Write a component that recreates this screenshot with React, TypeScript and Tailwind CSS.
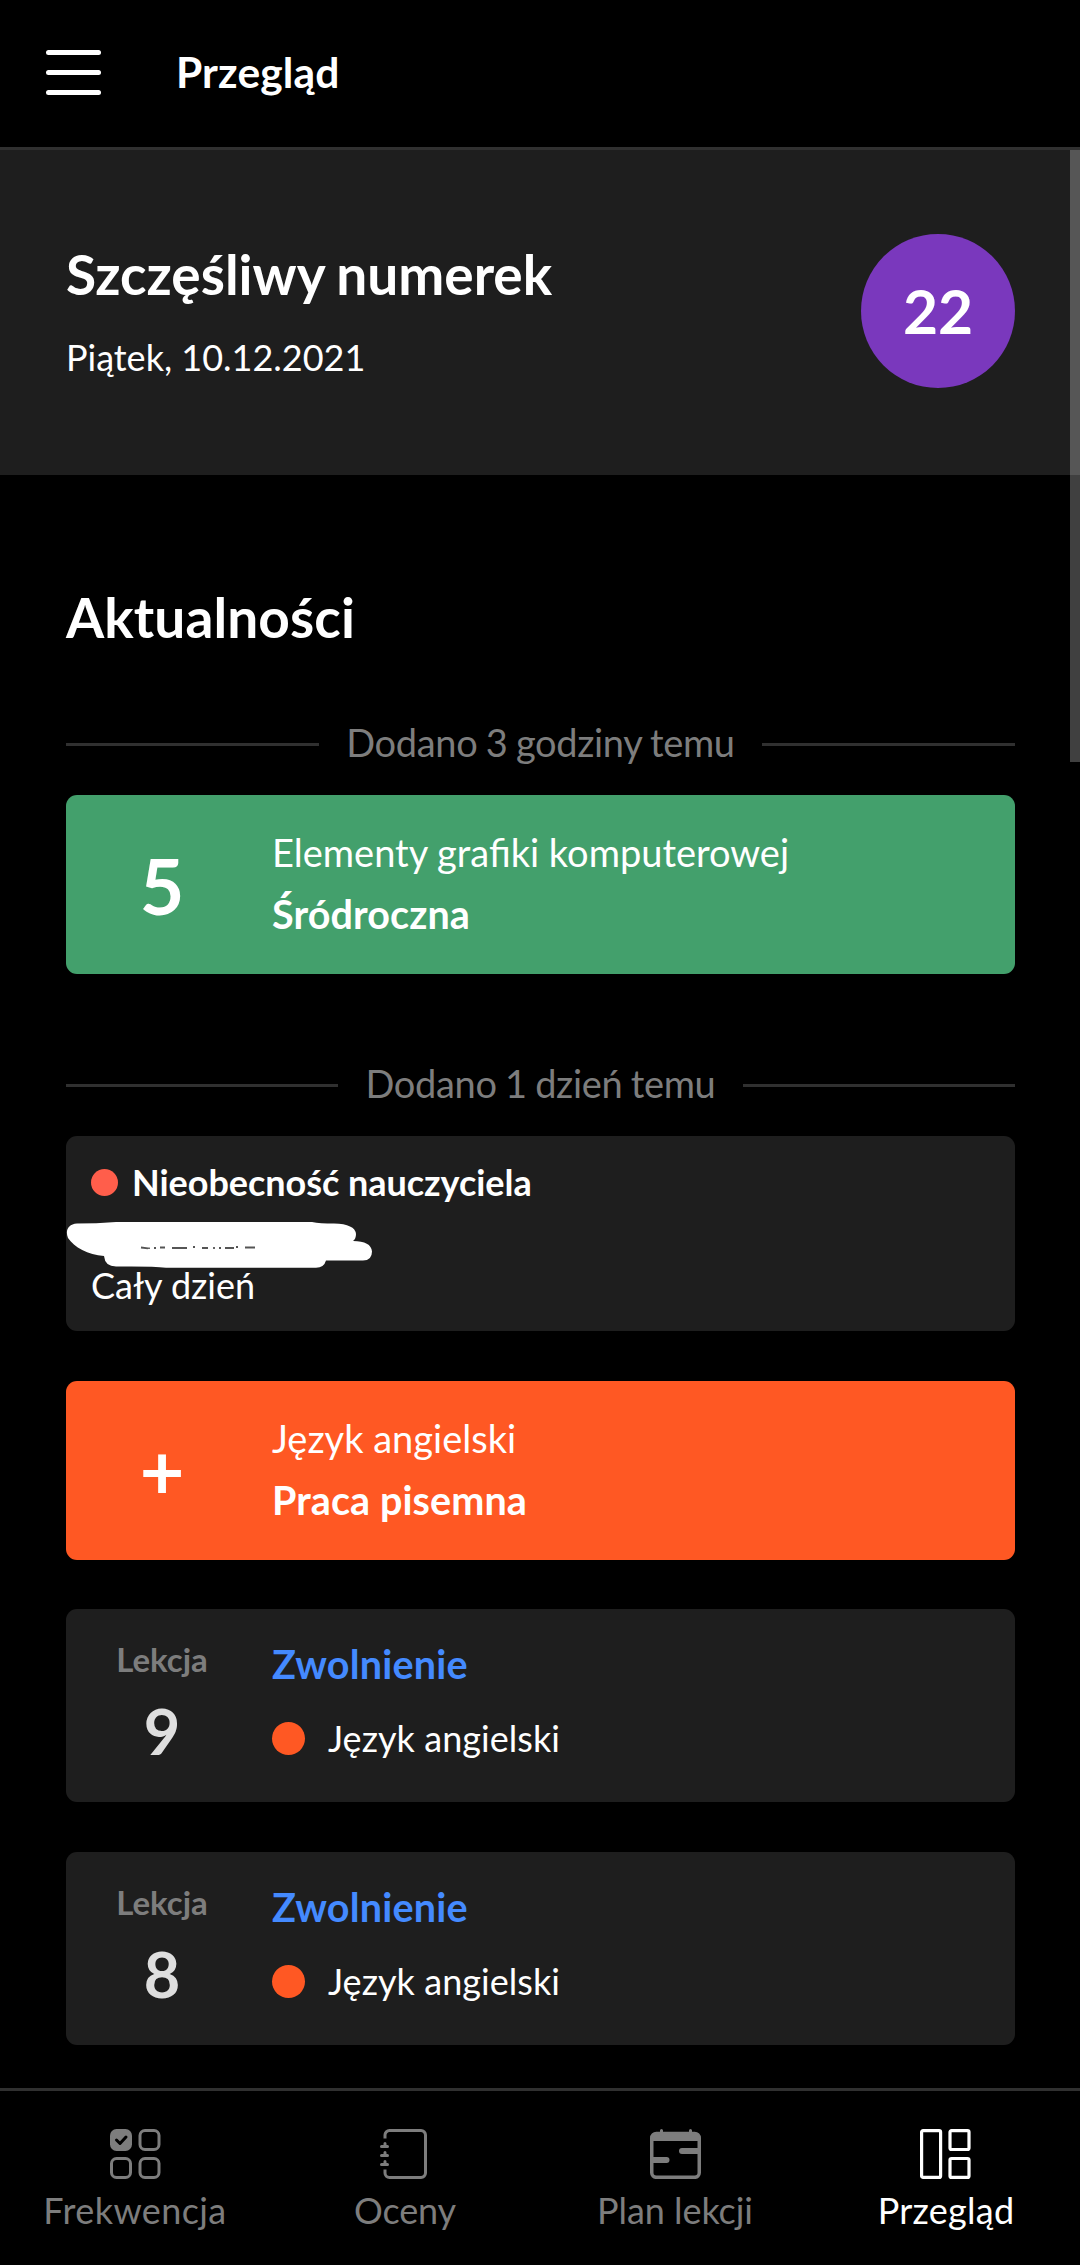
import type { ReactNode } from "react";

function HeaderBar() {
  return (
    <header className="flex h-[150px] shrink-0 items-start border-b-[3px] border-[#303030] pt-[47px] pl-[46px]">
      <button className="flex w-[55px] flex-col gap-[15px] pt-[3px]" aria-label="Menu">
        <span className="h-[5px] rounded-full bg-white" />
        <span className="h-[5px] rounded-full bg-white" />
        <span className="h-[5px] rounded-full bg-white" />
      </button>
      <h1 className="pl-[75px] text-[42.5px] leading-[50px] font-bold tracking-[0.15px]">Przegląd</h1>
    </header>
  );
}

function LuckyNumber() {
  return (
    <section className="flex h-[325px] items-start justify-between bg-[#1e1e1e] pt-[84px] pr-[65px] pl-[66px]">
      <div className="flex flex-col pt-[7px]">
        <h2 className="text-[55px] leading-[66px] font-bold [word-spacing:-1.5px]">Szczęśliwy numerek</h2>
        <p className="mt-[28px] text-[36px] leading-[44px]">Piątek, 10.12.2021</p>
      </div>
      <div className="flex size-[154px] items-center justify-center rounded-full bg-[#7a38bd] text-[60.5px] leading-[72px] font-bold">
        22
      </div>
    </section>
  );
}

function Divider({ children }: { children: ReactNode }) {
  return (
    <div className="flex h-[51px] items-center text-[38px] leading-[46px] text-[#7d7d7d]">
      <span className="h-[3px] flex-1 bg-[#303030]" />
      <span className="px-[27.5px] pb-[5px] tracking-[-0.33px] [word-spacing:-1px]">{children}</span>
      <span className="h-[3px] flex-1 bg-[#303030]" />
    </div>
  );
}

function GradeCard({ grade, subject, kind, className }: { grade: string; subject: string; kind: string; className: string }) {
  return (
    <article className={`flex h-[179px] items-center rounded-[11px] ${className}`}>
      <div className={`w-[192px] text-center text-[77px] leading-[92px] font-bold ${grade === "+" ? "pb-[4px]" : ""}`}>{grade}</div>
      <div className="flex flex-col pb-[4px] pl-[14px]">
        <p className="text-[38px] leading-[62px]">{subject}</p>
        <p className="text-[39.5px] leading-[62px] font-bold tracking-[0.1px]">{kind}</p>
      </div>
    </article>
  );
}

function AbsenceCard() {
  return (
    <article className="relative flex h-[195px] flex-col rounded-[11px] bg-[#1e1e1e] pt-[21px] pl-[25px]">
      <div className="flex items-center">
        <span className="size-[27px] rounded-full bg-[#ff5e4b]" />
        <h3 className="pl-[14px] text-[36px] leading-[50px] font-bold tracking-[-0.04px]">Nieobecność nauczyciela</h3>
      </div>
      <p className="mt-[53px] text-[36px] leading-[50px]">Cały dzień</p>
      <svg className="absolute top-[85px] left-0" width="310" height="50" viewBox="0 0 310 50" fill="none">
        <path
          d="M11 2.500Q30 2.500 50 1H246Q254 2.500 268 2.500Q289 3 290 13Q290 18 287 20Q305 20 306 30.500Q306 39.500 297 39.500H260Q258 46.700 250 46.700H100Q86 45 50 45.500Q39 45.500 38 35C22 34 8 26 2 17C-1 10 2 3 11 2.500Z"
          fill="#fff"
        />
        <path d="M75 26.500l7 .8M83 26.500v1.500M88 27h2M94 26.500h5M106 27h15M127 26h2M136 27h6M148 26v2M153 27h2M159 27h9M170 26h2M179 26.500h10" stroke="#555" strokeWidth="1.8" />
      </svg>
    </article>
  );
}

function LessonCard({ lesson }: { lesson: number }) {
  return (
    <article className="flex h-[193px] rounded-[11px] bg-[#1e1e1e]">
      <div className="flex w-[192px] flex-col items-center pt-[30px]">
        <span className="text-[33px] leading-[40px] font-bold text-[#7d7d7d]">Lekcja</span>
        <span className="mt-[16px] text-[63px] leading-[72px] font-bold text-[#dedede]">{lesson}</span>
      </div>
      <div className="flex flex-col pt-[30px] pl-[14px]">
        <span className="text-[39.5px] leading-[50px] font-bold tracking-[0.22px] text-[#448aff]">Zwolnienie</span>
        <div className="mt-[24px] flex items-center">
          <span className="size-[33px] rounded-full bg-[#ff5823]" />
          <span className="pl-[23px] text-[36px] leading-[50px] tracking-[0.05px]">Język angielski</span>
        </div>
      </div>
    </article>
  );
}

function AttendanceIcon() {
  return (
    <svg width="51" height="50" viewBox="0 0 51 50" fill="none" stroke="currentColor" strokeWidth="3">
      <rect width="22" height="22" rx="6.500" fill="currentColor" stroke="none" />
      <path d="M6.500 11l3.500 3.500 6-6.500" stroke="#000" strokeLinecap="round" strokeLinejoin="round" />
      <rect x="30" y="1.500" width="19" height="19" rx="5" />
      <rect x="1.500" y="29.500" width="19" height="19" rx="5" />
      <rect x="30" y="29.500" width="19" height="19" rx="5" />
    </svg>
  );
}

function NotebookIcon() {
  return (
    <svg width="51" height="50" viewBox="0 0 51 50" fill="none" stroke="currentColor" strokeWidth="3">
      <path d="M5 9.500V6a4.500 4.500 0 0 1 4.500-4.500H41A4.500 4.500 0 0 1 45.500 6v38a4.500 4.500 0 0 1-4.500 4.500H9.500A4.500 4.500 0 0 1 5 44v-3.500" />
      <path d="M1.500 17.500h6M5 17v-2.500M1.500 26.500h6M5 26v-2.500M1.500 35.500h6M5 35v-2.500" strokeLinecap="round" />
    </svg>
  );
}

function TimetableIcon() {
  return (
    <svg width="51" height="50" viewBox="0 0 51 50" fill="none" stroke="currentColor" strokeWidth="3">
      <rect x="1.750" y="4.500" width="47.500" height="43.800" rx="4.500" strokeWidth="3.500" />
      <path d="M2 12V8.500a4 4 0 0 1 4-4h39a4 4 0 0 1 4 4V12Z" fill="currentColor" stroke="none" />
      <path d="M11.500 5V1.500M40.500 5V1.500" strokeLinecap="round" />
      <path d="M32 22H48M2 31h14.500" strokeWidth="6" strokeLinecap="round" />
    </svg>
  );
}

function OverviewIcon() {
  return (
    <svg width="51" height="50" viewBox="0 0 51 50" fill="none" stroke="currentColor" strokeWidth="3.2">
      <rect x="1.600" y="1.600" width="19" height="46.800" rx="1.500" />
      <rect x="30" y="1.600" width="19" height="18.900" rx="1.500" />
      <rect x="30" y="29.500" width="19" height="18.900" rx="1.500" />
    </svg>
  );
}

function Tab({ icon, label, active = false, labelClass = "" }: { icon: ReactNode; label: string; active?: boolean; labelClass?: string }) {
  return (
    <div className={`flex flex-1 flex-col items-center pt-[38px] ${active ? "text-white" : "text-[#7d7d7d]"}`}>
      {icon}
      <span className={`mt-[6px] text-[36px] leading-[50px] ${labelClass}`}>{label}</span>
    </div>
  );
}

export default function App() {
  return (
    <div className="relative flex h-[2265px] w-[1080px] flex-col overflow-hidden bg-black font-['Lato',sans-serif] text-white">
      <HeaderBar />
      <main className="flex flex-1 flex-col">
        <LuckyNumber />
        <section className="flex flex-col pt-[109px] pr-[65px] pl-[66px]">
          <h2 className="text-[55px] leading-[66px] font-bold tracking-[0.1px]">Aktualności</h2>
          <div className="pt-[69px]">
            <Divider>Dodano 3 godziny temu</Divider>
          </div>
          <div className="pt-[25px]">
            <GradeCard grade="5" subject="Elementy grafiki komputerowej" kind="Śródroczna" className="bg-[#43a06c]" />
          </div>
          <div className="pt-[86px]">
            <Divider>Dodano 1 dzień temu</Divider>
          </div>
          <div className="flex flex-col gap-[50px] pt-[25px]">
            <AbsenceCard />
            <GradeCard grade="+" subject="Język angielski" kind="Praca pisemna" className="bg-[#ff5823]" />
            <div className="-mt-px">
              <LessonCard lesson={9} />
            </div>
            <LessonCard lesson={8} />
          </div>
        </section>
      </main>
      <nav className="flex h-[177px] shrink-0 border-t-[3px] border-[#303030]">
        <Tab icon={<AttendanceIcon />} label="Frekwencja" labelClass="tracking-[0.4px]" />
        <Tab icon={<NotebookIcon />} label="Oceny" labelClass="tracking-[-0.1px]" />
        <Tab icon={<TimetableIcon />} label="Plan lekcji" labelClass="tracking-[-0.05px]" />
        <Tab icon={<OverviewIcon />} label="Przegląd" labelClass="pl-[2px] tracking-[0.25px]" active />
      </nav>
      <div className="absolute top-[150px] right-0 h-[612px] w-[10px] bg-white/25" />
    </div>
  );
}
